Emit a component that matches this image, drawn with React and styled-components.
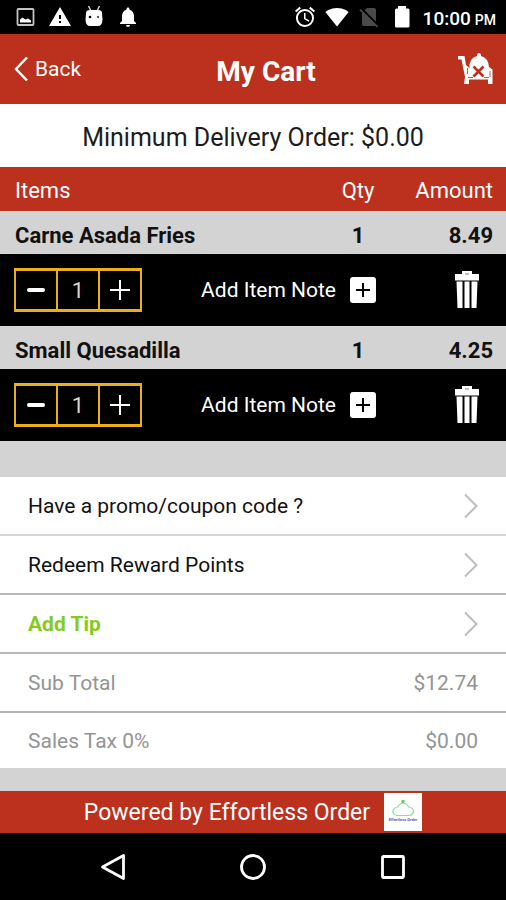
import React, { useState } from "react";
import styled, { createGlobalStyle } from "styled-components";
import {
  MdAlarm,
  MdNoSim,
  MdNotifications,
  MdSignalWifi4Bar,
  MdWarning
} from "react-icons/md";

const red = "#bc301e";
const grey = "#d3d3d3";
const yellow = "#e9b01c";

const GlobalStyle = createGlobalStyle`
  * {
    box-sizing: border-box;
  }

  body {
    margin: 0;
    background: #000;
    font-family: Roboto, "Liberation Sans", sans-serif;
  }

  button {
    padding: 0;
    border: 0;
    background: none;
    color: inherit;
    font: inherit;
    cursor: pointer;
  }

  svg {
    display: block;
  }
`;

const Screen = styled.div`
  display: flex;
  flex-direction: column;
  min-height: 100vh;
  background: ${grey};
`;

const StatusBar = styled.div`
  display: flex;
  align-items: center;
  justify-content: space-between;
  height: 34px;
  padding: 0 10px 0 16px;
  background: #000;
  color: #fff;
`;

const StatusGroup = styled.div`
  display: flex;
  align-items: center;
  gap: ${props => props.gap};
`;

const Clock = styled.span`
  padding-top: 2px;
  font-size: 19px;
  font-weight: 500;

  small {
    margin-left: 4px;
    font-size: 14px;
  }
`;

const Header = styled.header`
  display: grid;
  grid-template-columns: 1fr auto 1fr;
  align-items: center;
  height: 70px;
  padding: 0 12px 0 14px;
  background: ${red};
  color: #fff;
`;

const BackLink = styled.a`
  display: flex;
  align-items: center;
  gap: 7px;
  color: #fff;
  font-size: 21px;
  text-decoration: none;
`;

const Title = styled.h1`
  margin: 0;
  padding: 4px 0 0 24px;
  font-size: 28px;
  font-weight: 700;
`;

const EmptyCart = styled.button`
  justify-self: end;
`;

const Minimum = styled.p`
  height: 63px;
  margin: 0;
  padding-top: 2px;
  background: #fff;
  color: #1c1c1c;
  font-size: 25px;
  line-height: 63px;
  text-align: center;
`;

const CartTable = styled.table`
  width: 100%;
  table-layout: fixed;
  border-collapse: collapse;
`;

const HeadCell = styled.th`
  width: ${props => props.width};
  height: 44px;
  padding: ${props => props.pad || "0"};
  padding-top: 2px;
  background: ${red};
  color: #fff;
  font-size: 22px;
  font-weight: 400;
  text-align: ${props => props.align};
`;

const ItemCell = styled.td`
  height: 43px;
  padding: ${props => props.pad || "0"};
  padding-top: 6px;
  color: #111;
  font-size: 22px;
  font-weight: 700;
  line-height: 26px;
  text-align: ${props => props.align};
`;

const ActionCell = styled.td`
  padding: 0;
  background: #000;
`;

const Actions = styled.div`
  display: flex;
  align-items: center;
  height: 72px;
  padding: 0 26px 0 14px;
  color: #fff;
`;

const Stepper = styled.div`
  display: grid;
  grid-template-columns: repeat(3, 40px);
  gap: 2px;
  height: 44px;
  padding: 3px 2px;
  background: ${yellow};
`;

const StepButton = styled.button`
  && {
    display: grid;
    place-items: center;
    background: #000;
  }
`;

const Quantity = styled.input`
  width: 100%;
  min-width: 0;
  padding: 0;
  border: 0;
  background: #000;
  color: #d8d8d8;
  font: 22px Roboto, sans-serif;
  text-align: center;
`;

const NoteButton = styled.button`
  && {
    display: flex;
    align-items: center;
    gap: 14px;
    margin-left: auto;
    margin-right: 78px;
    font-size: 21px;
    white-space: nowrap;
  }
`;

const Extras = styled.section`
  margin-top: 36px;
  background: #fff;
`;

const rowStyles = `
  display: flex;
  align-items: center;
  justify-content: space-between;
  width: 100%;
  padding: 0 28px;
  font-size: 21px;
`;

const OptionRow = styled.button`
  && {
    ${rowStyles}
    height: 59px;
    border-bottom: 2px solid ${props => props.$line || "#b9b9b9"};
    color: ${props => (props.$highlight ? "#84cb1c" : "#111")};
    font-weight: ${props => (props.$highlight ? 700 : 400)};
  }
`;

const Totals = styled.dl`
  margin: 0;
`;

const TotalRow = styled.div`
  ${rowStyles}
  height: 57px;
  color: #949494;

  & + & {
    border-top: 2px solid #b0b0b0;
  }

  dd {
    margin: 0;
  }
`;

const Footer = styled.footer`
  display: flex;
  align-items: center;
  justify-content: center;
  gap: 14px;
  height: 42px;
  margin-top: auto;
  background: ${red};
  color: #fff;
  font-size: 23px;
`;

const NavBar = styled.nav`
  display: grid;
  grid-template-columns: repeat(3, 1fr);
  place-items: center;
  height: 67px;
  padding: 0 43px;
  background: #000;
`;

const PictureIcon = () => (
  <svg width="19" height="18" viewBox="0 0 19 18">
    <rect x="1.5" y="1" width="16" height="16" rx="1" fill="none" stroke="#c4c4c4" strokeWidth="1.8" />
    <path d="M4 14.500v-3l2.500-2 3 2 2.500-1 3 2v2z" fill="#fff" />
  </svg>
);

const RobotIcon = () => (
  <svg width="18" height="24" viewBox="0 0 18 24">
    <path d="M3.500 1l2.500 5M14.500 1l-2.500 5" stroke="#ddd" strokeWidth="1.4" />
    <path d="M1 8q0-3 4-3h8q4 0 4 3l.5 7q-.5 6-4.500 6H5q-4 0-4.500-6z" fill="#fff" />
    <circle cx="5" cy="12" r="1.300" />
    <circle cx="13" cy="12" r="0.900" />
  </svg>
);

const BatteryIcon = () => (
  <svg width="26" height="24" viewBox="0 0 26 24">
    <path d="M9 1h8v2.500h2q1.500 0 1.500 1.500v16q0 1.500-1.500 1.500H7.500Q6 22.500 6 21V5q0-1.500 1.500-1.500H9z" fill="#fff" />
  </svg>
);

const CartIcon = () => (
  <svg width="36" height="34" viewBox="0 0 36 34">
    <path d="M0 4h6.500l1.500 9 3.500 3q-.5-10 7.500-12 0-3 2-3t2 3q7.500 2 8 11l3.500 2.500V32h-4.500v-4.500H11V32H6l1-7L3.500 7.500H0z" fill="#fff" />
    <path d="M15.500 14.500l10 10M25.500 14.500l-10 10" stroke={red} strokeWidth="2.600" />
    <path d="M9.500 16v6M32 19v6M10 25.500h5M26 25.500h5" stroke={red} strokeWidth="0.800" />
  </svg>
);

const TrashIcon = () => (
  <svg width="26" height="38" viewBox="0 0 26 38">
    <path d="M8 0h10v3h7v6.500H1V3h7z" fill="#fff" />
    <path d="M11 3h4" stroke="#aaa" strokeWidth="1.500" />
    <path d="M2.500 10.500h6V37H3.500zM10.500 10.500h5V37h-5zM17.500 10.500h6L22.500 37h-5z" fill="#fff" />
  </svg>
);

const Chevron = () => (
  <svg width="14" height="26" viewBox="0 0 14 26">
    <path d="M1 1.500L12.500 13 1 24.500" fill="none" stroke="#bdbdbd" strokeWidth="2" />
  </svg>
);

const BrandLogo = () => (
  <svg width="38" height="38" viewBox="0 0 38 38">
    <path d="M0 0h38v38H0z" fill="#fff" />
    <path
      d="M13 22.500q-5-1.500-4-5 1-3 5-3.500 1-3.500 5-4 4.500.5 5.500 4 4 .5 5 3.500.5 3.500-4 5z"
      fill="none"
      stroke="#8fe096"
      strokeWidth="1.200"
    />
    <circle cx="19" cy="8.500" r="1.800" fill="#62cf6b" />
    <text x="19" y="28" textAnchor="middle" fontSize="4" fontWeight="700" fill="#5555b8">
      Effortless Order
    </text>
  </svg>
);

const CartItem = ({ name, price }) => {
  const [qty, setQty] = useState(1);

  return (
    <tbody>
      <tr>
        <ItemCell align="left" pad="0 0 0 15px">{name}</ItemCell>
        <ItemCell align="center">{qty}</ItemCell>
        <ItemCell align="right" pad="0 13px 0 0">{(price * qty).toFixed(2)}</ItemCell>
      </tr>
      <tr>
        <ActionCell colSpan="3">
          <Actions>
            <Stepper>
              <StepButton aria-label="Less" onClick={() => setQty(Math.max(1, qty - 1))}>
                <svg width="18" height="18" viewBox="0 0 18 18">
                  <path d="M2 9h14" stroke="#fff" strokeWidth="4" strokeLinecap="round" />
                </svg>
              </StepButton>
              <Quantity aria-label={`Quantity of ${name}`} value={qty} readOnly />
              <StepButton aria-label="More" onClick={() => setQty(qty + 1)}>
                <svg width="20" height="20" viewBox="0 0 20 20">
                  <path d="M0 10h20M10 0v20" stroke="#fff" strokeWidth="2" />
                </svg>
              </StepButton>
            </Stepper>
            <NoteButton>
              Add Item Note
              <svg width="26" height="26" viewBox="0 0 26 26">
                <rect width="26" height="26" rx="3" fill="#fff" />
                <path d="M6 13h14M13 6v14" stroke="#000" strokeWidth="2" />
              </svg>
            </NoteButton>
            <button aria-label={`Remove ${name}`}>
              <TrashIcon />
            </button>
          </Actions>
        </ActionCell>
      </tr>
    </tbody>
  );
};

const App = () => (
  <Screen>
    <GlobalStyle />
    <StatusBar>
      <StatusGroup gap="13px">
        <PictureIcon />
        <MdWarning size={24} />
        <RobotIcon />
        <MdNotifications size={24} />
      </StatusGroup>
      <StatusGroup gap="8px">
        <MdAlarm size={24} />
        <MdSignalWifi4Bar size={24} />
        <MdNoSim size={24} color="#4a4a4a" />
        <BatteryIcon />
        <Clock>
          10:00<small>PM</small>
        </Clock>
      </StatusGroup>
    </StatusBar>
    <Header>
      <BackLink href="#menu">
        <svg width="14" height="26" viewBox="0 0 14 26">
          <path d="M13 1.500L2 13l11 11.500" fill="none" stroke="#fff" strokeWidth="2.500" />
        </svg>
        Back
      </BackLink>
      <Title>My Cart</Title>
      <EmptyCart aria-label="Empty cart">
        <CartIcon />
      </EmptyCart>
    </Header>
    <Minimum>Minimum Delivery Order: $0.00</Minimum>
    <CartTable>
      <thead>
        <tr>
          <HeadCell align="left" pad="0 0 0 15px">Items</HeadCell>
          <HeadCell align="center" width="80px">Qty</HeadCell>
          <HeadCell align="right" width="108px" pad="0 13px 0 0">Amount</HeadCell>
        </tr>
      </thead>
      <CartItem name="Carne Asada Fries" price={8.49} />
      <CartItem name="Small Quesadilla" price={4.25} />
    </CartTable>
    <Extras>
      <OptionRow $line="#d6d6d6">
        Have a promo/coupon code ?
        <Chevron />
      </OptionRow>
      <OptionRow>
        Redeem Reward Points
        <Chevron />
      </OptionRow>
      <OptionRow $highlight>
        Add Tip
        <Chevron />
      </OptionRow>
      <Totals>
        <TotalRow>
          <dt>Sub Total</dt>
          <dd>$12.74</dd>
        </TotalRow>
        <TotalRow>
          <dt>Sales Tax 0%</dt>
          <dd>$0.00</dd>
        </TotalRow>
      </Totals>
    </Extras>
    <Footer>
      Powered by Effortless Order
      <BrandLogo />
    </Footer>
    <NavBar>
      <button aria-label="Back">
        <svg width="26" height="28" viewBox="0 0 26 28">
          <path d="M23.500 2.500v23L2.500 14z" fill="none" stroke="#fff" strokeWidth="2.800" strokeLinejoin="round" />
        </svg>
      </button>
      <button aria-label="Home">
        <svg width="28" height="28" viewBox="0 0 28 28">
          <circle cx="14" cy="14" r="11.500" fill="none" stroke="#fff" strokeWidth="2.800" />
        </svg>
      </button>
      <button aria-label="Recent apps">
        <svg width="26" height="26" viewBox="0 0 26 26">
          <rect x="2.500" y="2.500" width="21" height="21" rx="1" fill="none" stroke="#fff" strokeWidth="2.800" />
        </svg>
      </button>
    </NavBar>
  </Screen>
);

export default App;
